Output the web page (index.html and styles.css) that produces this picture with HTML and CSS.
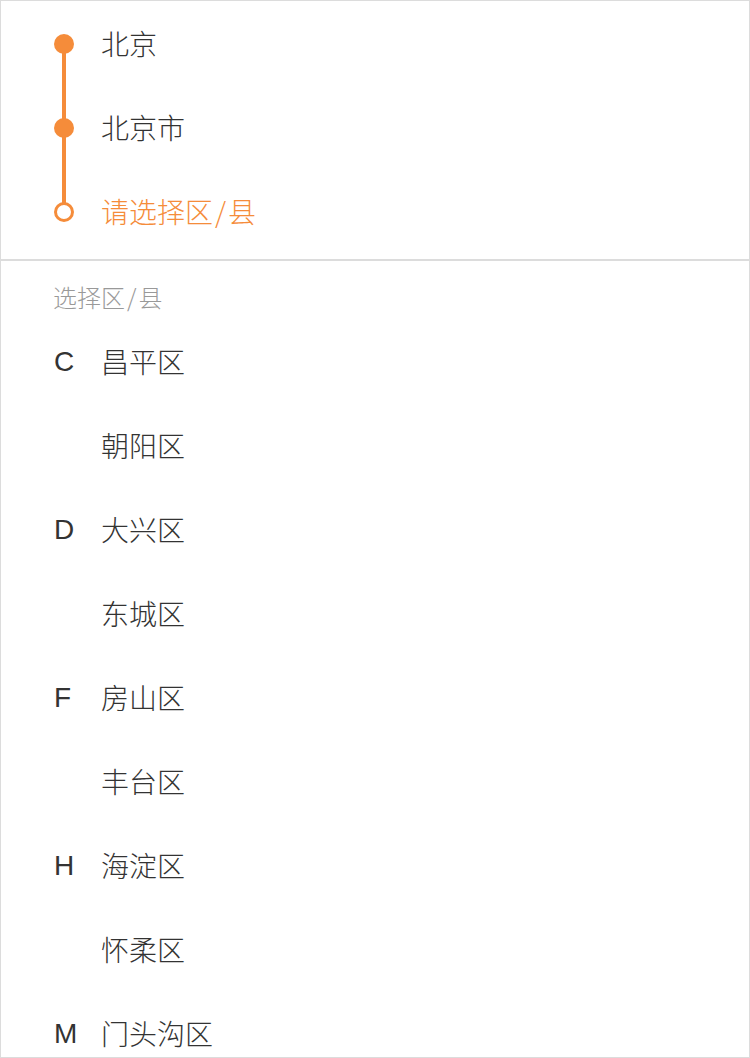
FILE: index.html
```html
<!DOCTYPE html>
<html lang="zh-CN">
<head>
<meta charset="utf-8">
<link rel="stylesheet" href="styles.css">
</head>
<body>
<div class="page">
  <section class="steps">
    <div class="step done first"><span class="dot"></span><span class="step-text">北京</span></div>
    <div class="step done"><span class="dot"></span><span class="step-text">北京市</span></div>
    <div class="step current last"><span class="dot"></span><span class="step-text">请选择区<span class="slash">/</span>县</span></div>
  </section>
  <section class="list">
    <div class="list-title">选择区<span class="slash">/</span>县</div>
    <div class="row"><span class="letter">C</span><span class="name">昌平区</span></div>
    <div class="row"><span class="letter"></span><span class="name">朝阳区</span></div>
    <div class="row"><span class="letter">D</span><span class="name">大兴区</span></div>
    <div class="row"><span class="letter"></span><span class="name">东城区</span></div>
    <div class="row"><span class="letter">F</span><span class="name">房山区</span></div>
    <div class="row"><span class="letter"></span><span class="name">丰台区</span></div>
    <div class="row"><span class="letter">H</span><span class="name">海淀区</span></div>
    <div class="row"><span class="letter"></span><span class="name">怀柔区</span></div>
    <div class="row"><span class="letter">M</span><span class="name">门头沟区</span></div>
  </section>
</div>
</body>
</html>
```
FILE: styles.css
```css
* { box-sizing: border-box; margin: 0; padding: 0; }
html, body { width: 750px; height: 1058px; overflow: hidden; background: #fff; }
body {
  font-family: "Noto Sans CJK SC", "Noto Sans", "Liberation Sans", sans-serif;
  color: #333;
  font-weight: 300;
}
.page {
  width: 750px;
  height: 1058px;
  border: 1px solid #dcdcdc;
  overflow: hidden;
}
.steps {
  padding: 1px 0 5px 0;
  border-bottom: 2px solid #dcdcdc;
}
.step {
  position: relative;
  height: 84px;
  display: flex;
  align-items: center;
  padding-left: 53px;
}
.step::before {
  content: "";
  position: absolute;
  left: 61px;
  width: 4px;
  top: 0;
  bottom: 0;
  background: #f58c3a;
}
.step.first::before { top: 42px; }
.step.last::before { bottom: 42px; }
.dot {
  position: relative;
  width: 20px;
  height: 20px;
  border-radius: 50%;
  background: #f58c3a;
  flex: none;
}
.step.current .dot {
  background: #fff;
  border: 3px solid #f58c3a;
}
.step-text {
  margin-left: 27px;
  font-size: 28px;
  line-height: 1;
  margin-top: -2px;
}
.step.current .step-text { color: #f58c3a; }
.slash { margin: 0 2px; }
.list-title {
  height: 59px;
  padding: 19px 0 0 52px;
  font-size: 24px;
  line-height: 34px;
  color: #999;
}
.row {
  height: 84px;
  display: flex;
  align-items: center;
  padding-left: 53px;
  font-size: 28px;
}
.letter {
  width: 47px;
  flex: none;
  font-family: "Liberation Sans", "Noto Sans", sans-serif;
  font-size: 28px;
}
.name { line-height: 1; margin-top: -3px; }
```
